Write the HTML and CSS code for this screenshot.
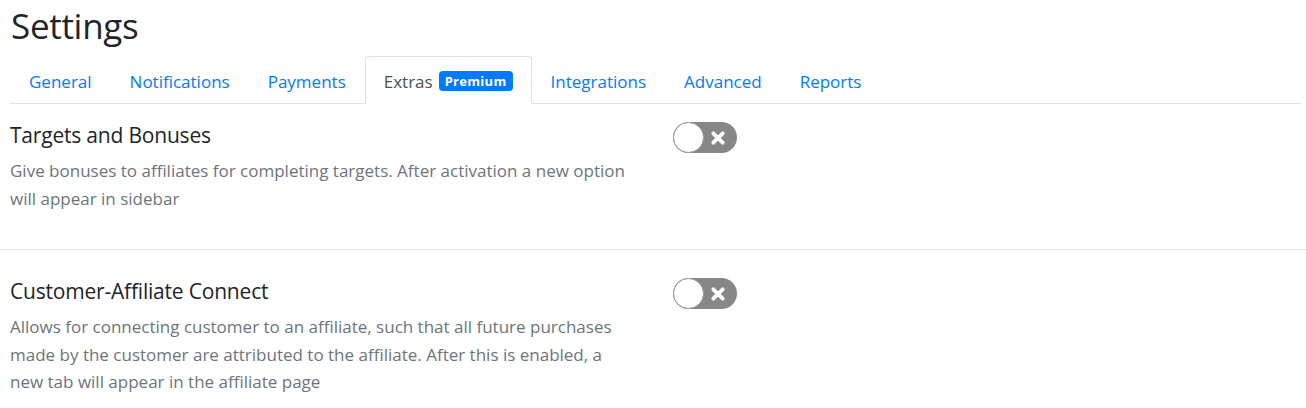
FILE: index.html
```html
<!DOCTYPE html>
<html lang="en">
<head>
<meta charset="utf-8">
<title>Settings</title>
<link rel="stylesheet" href="styles.css">
</head>
<body>
<div class="page">
  <h1 class="title">Settings</h1>
  <ul class="tabs">
    <li class="tab"><a class="tab-link">General</a></li>
    <li class="tab"><a class="tab-link">Notifications</a></li>
    <li class="tab"><a class="tab-link">Payments</a></li>
    <li class="tab active"><a class="tab-link">Extras <span class="badge">Premium</span></a></li>
    <li class="tab"><a class="tab-link">Integrations</a></li>
    <li class="tab"><a class="tab-link">Advanced</a></li>
    <li class="tab"><a class="tab-link">Reports</a></li>
  </ul>

  <div class="setting first">
    <div class="setting-text">
      <h2 class="setting-title">Targets and Bonuses</h2>
      <p class="setting-desc">Give bonuses to affiliates for completing targets. After activation a new option will appear in sidebar</p>
    </div>
    <div class="setting-control">
      <span class="switch">
        <span class="knob"></span>
        <svg class="switch-x" width="16" height="16" viewBox="0 0 16 16"><path d="M3.3 3.3 L12.7 12.7 M12.7 3.3 L3.3 12.7" stroke="#fff" stroke-width="3.8" stroke-linecap="round" fill="none"/></svg>
      </span>
    </div>
  </div>

  <hr class="sep">

  <div class="setting">
    <div class="setting-text">
      <h2 class="setting-title">Customer-Affiliate Connect</h2>
      <p class="setting-desc">Allows for connecting customer to an affiliate, such that all future purchases made by the customer are attributed to the affiliate. After this is enabled, a new tab will appear in the affiliate page</p>
    </div>
    <div class="setting-control">
      <span class="switch">
        <span class="knob"></span>
        <svg class="switch-x" width="16" height="16" viewBox="0 0 16 16"><path d="M3.3 3.3 L12.7 12.7 M12.7 3.3 L3.3 12.7" stroke="#fff" stroke-width="3.8" stroke-linecap="round" fill="none"/></svg>
      </span>
    </div>
  </div>
</div>
</body>
</html>
```

FILE: styles.css
```css
* { box-sizing: border-box; }
html, body {
  margin: 0;
  padding: 0;
  background: #fff;
}
body {
  font-family: "Open Sans", "Noto Sans", "Liberation Sans", sans-serif;
  color: #212529;
  width: 1306px;
  height: 408px;
  overflow: hidden;
}
.page {
  padding: 0 5px 0 10px;
}
.title {
  margin: 5px 0 9px 1px;
  font-size: 35px;
  font-weight: 400;
  line-height: 42px;
  letter-spacing: -0.3px;
  color: #212529;
}
.tabs {
  display: flex;
  list-style: none;
  margin: 0;
  padding: 0;
  border-bottom: 1px solid #dee2e6;
}
.tab {
  margin-bottom: -1px;
}
.tab-link {
  display: flex;
  align-items: center;
  height: 48px;
  padding: 2px 18px 0;
  border: 1px solid transparent;
  border-radius: 4px 4px 0 0;
  font-size: 17px;
  color: #007bff;
}
.tab.active .tab-link {
  color: #495057;
  background: #fff;
  border-color: #dee2e6 #dee2e6 #fff;
}
.badge {
  display: inline-flex;
  align-items: center;
  height: 20px;
  margin-left: 6px;
  padding: 0 6px;
  border-radius: 4px;
  background: #007bff;
  color: #fff;
  font-size: 13px;
  font-weight: 700;
  letter-spacing: 0.3px;
}
.setting {
  display: flex;
  padding-top: 28px;
}
.setting.first {
  padding-top: 18px;
}
.setting-text {
  width: 622px;
}
.setting-control {
  margin-left: 41px;
}
.setting-title {
  margin: 0;
  font-size: 21px;
  font-weight: 400;
  line-height: 26px;
  color: #212529;
  letter-spacing: -0.2px;
}
.setting-desc {
  margin: 9px 0 0 0;
  font-size: 17px;
  line-height: 27.5px;
  color: #6c757d;
}
.sep {
  margin: 37px -5px 0 -10px;
  border: 0;
  border-top: 1px solid #dee2e6;
  height: 0;
}
.switch {
  position: relative;
  display: block;
  width: 64px;
  height: 31px;
  border-radius: 16px;
  background: #878787;
}
.knob {
  position: absolute;
  left: 0;
  top: 0;
  width: 31px;
  height: 31px;
  border-radius: 50%;
  background: #fff;
  border: 1px solid #9d9d9d;
}
.switch-x {
  position: absolute;
  left: 37px;
  top: 7.5px;
}
```
